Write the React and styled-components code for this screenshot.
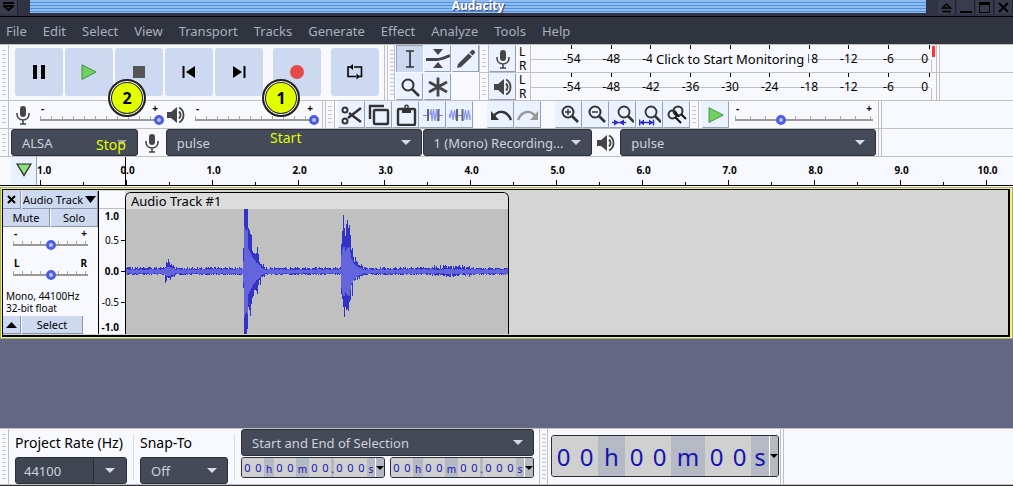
import React, { useState } from 'react'
import styled, { createGlobalStyle } from 'styled-components'

const menus = ['File', 'Edit', 'Select', 'View', 'Transport', 'Tracks', 'Generate', 'Effect', 'Analyze', 'Tools', 'Help']
const levels = ['-54', '-48', '-42', '-36', '-30', '-24', '-18', '-12', '-6', '0']
const hiddenLevels = ['-36', '-30', '-24'] // covered by the monitoring hint
const seconds = ['1.0', '0.0', '1.0', '2.0', '3.0', '4.0', '5.0', '6.0', '7.0', '8.0', '9.0', '10.0']

// [up, down, inner] peaks in pixels from the centre line, keyed by start column
const bursts = {
  39: [[4, 11, 3], [9, 9, 4], [8, 5, 4], [12, 6, 4], [9, 6, 4], [6, 8, 4], [7, 5, 3], [5, 5, 3], [6, 4, 3], [4, 5, 3]],
  117: [
    [23, 16, 10], [62, 63, 45], [62, 63, 42], [62, 63, 40], [62, 57, 42], [43, 35, 22], [41, 38, 20], [37, 44, 18],
    [36, 32, 16], [20, 26, 14], [18, 24, 12], [18, 18, 11], [17, 18, 10], [18, 19, 8], [24, 22, 8], [17, 13, 7],
    [9, 8, 6], [7, 13, 5], [7, 5, 3], [5, 5, 3], [7, 4, 2], [4, 5, 2],
  ],
  215: [
    [27, 22, 16], [40, 27, 22], [56, 35, 24], [43, 45, 24], [35, 35, 20], [47, 38, 22], [51, 37, 24], [43, 39, 23],
    [46, 30, 24], [36, 28, 18], [21, 13, 12], [23, 24, 11], [14, 7, 8], [9, 9, 7], [14, 8, 6], [10, 5, 5],
    [9, 8, 4], [6, 5, 4], [6, 7, 3], [5, 4, 3], [7, 4, 3], [5, 4, 2],
  ],
}

const makeWave = (length) => {
  let seed = 7
  const noise = () => {
    seed = (seed * 1103515245 + 12345) % 2147483648
    return seed / 2147483648
  }
  const columns = Array.from({ length }, (_, x) => {
    const swell = x > 305 && x < 345 ? 2 : 0
    return [2 + Math.round(noise() * (2 + swell)), 2 + Math.round(noise() * (1 + swell)), noise() > 0.4 ? 2 : 1]
  })
  Object.entries(bursts).forEach(([start, peaks]) => {
    peaks.forEach((peak, i) => { columns[Number(start) + i] = peak })
  })
  return columns
}
const wave = makeWave(382)
const outerPath = wave.map(([up, down], x) => `M${x} ${62 - up}h1v${up + down + 1}h-1z`).join('')
const innerPath = wave.map(([, , inner], x) => `M${x} ${62 - inner}h1v${inner * 2 + 1}h-1z`).join('')

//icons
const Mic = () => (
  <svg width='16' height='22' viewBox='0 0 16 22' fill='none' stroke='#454545'>
    <rect x='5' y='2' width='6' height='11' rx='3' fill='#454545' stroke='none' />
    <path d='M2 9v1c0 8 12 8 12 0V9M8 16v4M5 20h6' strokeWidth='1.6' />
  </svg>
)
const Speaker = () => (
  <svg width='20' height='20' viewBox='0 0 20 20' fill='none' stroke='#454545'>
    <path d='M1 7h4l6-5v16l-6-5H1z' fill='#454545' stroke='none' />
    <path d='M13 6.500c2 2 2 5 0 7' strokeWidth='2' />
    <path d='M13 2.500c6 3 6 12 0 15' strokeWidth='1.800' />
  </svg>
)
const PlayIcon = () => (
  <svg width='16' height='16' viewBox='0 0 16 16'>
    <path d='M1 .8 15.200 8 1 15.500z' fill='#70d060' stroke='#3e8a3e' strokeWidth='.9' />
  </svg>
)
const Icon = ({ children, width = 2 }) => (
  <svg width='22' height='22' viewBox='0 0 22 22' fill='none' stroke='#333' strokeWidth={width}>{children}</svg>
)

const transportIcons = {
  Pause: <Icon><path d='M7 4v14M15 4v14' stroke='#000' strokeWidth='4' /></Icon>,
  Play: <PlayIcon />,
  Stop: <Icon><path d='M5 5h12v12H5z' fill='#555' stroke='none' /></Icon>,
  'Skip to Start': <Icon><path d='M5.500 5v12' stroke='#000' /><path d='M17 5v12l-9-6z' fill='#000' stroke='none' /></Icon>,
  'Skip to End': <Icon><path d='M16.500 5v12' stroke='#000' /><path d='M5 5v12l9-6z' fill='#000' stroke='none' /></Icon>,
  Record: <Icon><circle cx='11' cy='11' r='7' fill='#e34a48' stroke='none' /></Icon>,
  Loop: (
    <Icon width={1.6}>
      <path d='M8 6H4v9.500h8M10 6h7.500v9.500H15' stroke='#000' strokeDasharray='none' />
      <path d='M9 3v6L5.500 6zM12.500 12.500v6l3.500-3z' fill='#000' stroke='none' />
    </Icon>
  ),
}

const tools = [
  ['Selection', <Icon width={1.7}><path d='M7 3h8M7 19h8M11 3v16' /></Icon>],
  ['Envelope', (
    <svg width='24' height='22' viewBox='0 0 24 22'>
      <path d='M7 1h10l-5 6zM7 20h10l-5-6z' fill='#454545' />
      <path d='M0 11.500h12c5-1 7-2 12-4' fill='none' stroke='#454545' strokeWidth='2.800' />
    </svg>
  )],
  ['Draw', <Icon><path d='M2 20l1-4L13.500 5.500l3.500 3L6 19zM14.500 4.500l2.200-2.200q1-1 2 0l1 1q1 1 0 2l-2.200 2.200z' fill='#454545' stroke='none' /></Icon>],
  ['Zoom', <Icon><circle cx='9' cy='9' r='5.500' /><path d='M13 13l7 7' strokeWidth='2.500' /></Icon>],
  ['Multi', <Icon width={2.8}><path d='M11 1.500v19M2 6l18 10M20 6 2 16' stroke='#454545' /></Icon>],
]

const lens = <><circle cx='10' cy='8' r='5.500' /><path d='M14 12l6 6' strokeWidth='2.600' /></>
const editTools = [
  ['Cut', <Icon><path d='M20 4 7 14M8 9l12 9' strokeWidth='2.600' /><circle cx='4' cy='6' r='2.500' /><circle cx='4' cy='17' r='2.500' /></Icon>],
  ['Copy', <Icon width={2.4}><rect x='6' y='6' width='14' height='14' rx='1' /><path d='M2 15V2h14' /></Icon>],
  ['Paste', <Icon width={2.4}><rect x='3' y='5' width='17' height='16' rx='1' /><path d='M7 4h9v5H7z' fill='#333' stroke='none' /><circle cx='11.500' cy='3' r='1.700' strokeWidth='1.400' /></Icon>],
  ['Trim', (
    <Icon width={1.2}>
      <path d='M1 11.500h5M17 11.500h4' stroke='#7681e8' />
      <path d='M8 11 9 5l1 12 1.500-12L13 17l1.500-12 1 12' stroke='#8a94f2' />
      <path d='M6 5v12M16.500 5v12' stroke='#666' strokeWidth='2' />
    </Icon>
  )],
  ['Silence', (
    <Icon width={1.2}>
      <path d='M0 10l1 4L2.500 6 4 16 5.500 6 7 16M15 16l1.500-10L18 16l1.500-10L21 16v-5' stroke='#8a94f2' />
      <path d='M8.500 11.500h5' stroke='#7681e8' />
      <path d='M8 5v12M13.500 5v12' stroke='#666' strokeWidth='2' />
    </Icon>
  )],
  null,
  ['Undo', <Icon><path d='M4 12C8 6 17 6 21 16' strokeWidth='2.400' /><path d='M1 7v9h8z' fill='#333' stroke='none' /></Icon>],
  ['Redo', <Icon><path d='M18 12C14 6 5 6 1 16' stroke='#999' strokeWidth='2.400' /><path d='M21 7v9h-8z' fill='#999' stroke='none' /></Icon>],
  null,
  ['Zoom In', <Icon>{lens}<path d='M10 5v6M7 8h6' strokeWidth='1.500' /></Icon>],
  ['Zoom Out', <Icon>{lens}<path d='M7 8h6' strokeWidth='1.500' /></Icon>],
  ['Zoom to Selection', <Icon width={1.8}><g transform='translate(2 0)'>{lens}</g><path d='M0 18.500h14' stroke='#2b2bd0' strokeWidth='1.400' /><path d='M2 15.500v6l5-3zM12 15.500v6l-5-3z' fill='#2b2bd0' stroke='none' /></Icon>],
  ['Fit to Width', <Icon width={1.8}><g transform='translate(2 0)'>{lens}</g><path d='M.7 15.500v6M14.500 15.500v6M0 18.500h14' stroke='#2b2bd0' strokeWidth='1.400' /><path d='M5 15.500v6l-4-3zM10 15.500v6l4-3z' fill='#2b2bd0' stroke='none' /></Icon>],
  ['Zoom Toggle', <Icon width={2}><circle cx='12' cy='7' r='4.500' /><circle cx='6.500' cy='10.500' r='4' /><path d='M15 10l5 5M9 13l6 6M9 8l4 5' stroke='#111' /></Icon>],
]

function Choice({ label, value, shaded }) {
  return (
    <SelectWrap $shaded={shaded}>
      <Select aria-label={label} defaultValue={value}><option>{value}</option></Select>
    </SelectWrap>
  )
}

function Slider({ label, initial, low = '-', high = '+', step = 11 }) {
  const [value, setValue] = useState(initial)
  return (
    <SliderBox>
      <Marks><span>{low}</span><span>{high}</span></Marks>
      <Range type='range' aria-label={label} $step={step} value={value} onChange={(e) => setValue(e.target.value)} />
    </SliderBox>
  )
}

function Meter({ label, icon, live }) {
  return (
    <MeterRow>
      <GripBar />
      <Tool aria-label={label}>{icon}</Tool>
      <Channels><span>L</span><span>R</span></Channels>
      <Scale>
        {levels.map((level) => (
          <Level key={level}>{live && hiddenLevels.includes(level) ? '' : level}</Level>
        ))}
        {live && <Monitor>Click to Start Monitoring</Monitor>}
      </Scale>
      <Clip $live={live} />
      <EndBar />
    </MeterRow>
  )
}

function TimeBox({ label, format, big }) {
  return (
    <TimeFrame role='group' aria-label={label} $big={big}>
      {format.split('').map((char, i) => (
        char === '0'
          ? <Digit key={i} $big={big} aria-label={`${label} digit ${i + 1}`} maxLength={1} defaultValue='0' />
          : <Unit key={i} $big={big} $char={char}>{char}</Unit>
      ))}
      <TimeButton aria-label={`${label} format`}><Triangle /></TimeButton>
    </TimeFrame>
  )
}

function App() {
  const [tool, setTool] = useState('Selection')

  return (
    <Page>
      <GlobalStyle />
      <TitleBar>
        <WindowButton aria-label='Window menu'>
          <svg width='11' height='10' viewBox='0 0 11 10' fill='none' stroke='#000' strokeWidth='2'><path d='M0 1h11M1 4h9L5.500 8z' /></svg>
        </WindowButton>
        <TitleText>Audacity</TitleText>
        <WindowButton aria-label='Shade'>
          <svg width='11' height='11' viewBox='0 0 11 11' fill='none' stroke='#000' strokeWidth='1.500'><path d='M1.500 6 5.500 2l4 4zM1 9.500h9' /></svg>
        </WindowButton>
        <WindowButton aria-label='Minimize'>
          <svg width='12' height='11' viewBox='0 0 12 11'><path d='M0 9h12v2H0z' /></svg>
        </WindowButton>
        <WindowButton aria-label='Maximize'>
          <svg width='11' height='11' viewBox='0 0 11 11'><path d='M0 0h11v11H0zM1 3v7h9V3z' fillRule='evenodd' /></svg>
        </WindowButton>
        <WindowButton aria-label='Close'>
          <svg width='11' height='11' viewBox='0 0 11 11' stroke='#000' strokeWidth='2'><path d='M1 1l9 9M10 1l-9 9' /></svg>
        </WindowButton>
      </TitleBar>

      <MenuBar>
        {menus.map((menu) => <MenuButton key={menu}>{menu}</MenuButton>)}
      </MenuBar>

      <ToolRow>
        <GripBar />
        <Transport>
          {Object.entries(transportIcons).map(([name, icon]) => (
            <TransportButton key={name} aria-label={name} $apart={name === 'Record' || name === 'Loop'}>
              {icon}
              {name === 'Stop' && <Badge $left='-7px'>2</Badge>}
              {name === 'Record' && <Badge $left='-11px'>1</Badge>}
            </TransportButton>
          ))}
        </Transport>
        <EndBar />
        <GripBar $slim />
        <ToolGrid>
          {tools.map(([name, icon]) => (
            <Tool key={name} aria-label={name} $active={tool === name} onClick={() => setTool(name)}>{icon}</Tool>
          ))}
        </ToolGrid>
        <Meters>
          <Meter label='Recording level' icon={<Mic />} live />
          <Meter label='Playback level' icon={<Speaker />} />
        </Meters>
      </ToolRow>

      <ToolRow>
        <GripBar />
        <Mixer>
          <Mic />
          <MixerSlider><Slider label='Recording volume' initial={100} /></MixerSlider>
          <Speaker />
          <MixerSlider><Slider label='Playback volume' initial={100} /></MixerSlider>
        </Mixer>
        <EndBar />
        <GripBar />
        <EditTools>
          {editTools.map((item, i) => (
            item ? <Tool key={i} aria-label={item[0]}>{item[1]}</Tool> : <Spacer key={i} />
          ))}
        </EditTools>
        <GripBar />
        <Speed>
          <Tool aria-label='Play at speed'><PlayIcon /></Tool>
          <SpeedSlider><Slider label='Playback speed' initial={33} step={15} /></SpeedSlider>
        </Speed>
        <EndBar />
      </ToolRow>

      <ToolRow>
        <GripBar />
        <Devices>
          <Choice label='Audio host' value='ALSA' shaded />
          <Mic />
          <Choice label='Recording device' value='pulse' />
          <Choice label='Recording channels' value='1 (Mono) Recording...' />
          <Speaker />
          <Choice label='Playback device' value='pulse' />
          <Note $x='96px' $y='3px'>Stop</Note>
          <Note $x='270px' $y='-4px'>Start</Note>
        </Devices>
        <EndBar />
      </ToolRow>

      <Timeline>
        <Pin aria-label='Pinned play head'>
          <svg width='16' height='14' viewBox='0 0 16 14'><path d='M1 1h14L8 12.500z' fill='#8ae07c' stroke='#222' strokeWidth='1.200' /></svg>
        </Pin>
        <Ruler>
          {seconds.map((second, i) => <Second key={i}>{second}</Second>)}
        </Ruler>
      </Timeline>

      <Track>
        <TrackPanel>
          <PanelRow>
            <PanelButton $narrow aria-label='Close track'>
              <svg width='9' height='9' viewBox='0 0 9 9' stroke='#000' strokeWidth='2'><path d='M1 1l7 7M8 1 1 8' /></svg>
            </PanelButton>
            <PanelButton>
              Audio Track
              <svg width='11' height='7' viewBox='0 0 11 7'><path d='M0 0h11L5.500 7z' /></svg>
            </PanelButton>
          </PanelRow>
          <PanelRow>
            <PanelButton>Mute</PanelButton>
            <PanelButton>Solo</PanelButton>
          </PanelRow>
          <PanelSliders>
            <Slider label='Gain' initial={50} step={9} />
            <Slider label='Pan' initial={50} low='L' high='R' step={9} />
          </PanelSliders>
          <Info>Mono, 44100Hz<br />32-bit float</Info>
          <PanelRow $foot>
            <PanelButton $narrow aria-label='Collapse'>
              <svg width='11' height='6' viewBox='0 0 11 6'><path d='M0 6h11L5.500 0z' /></svg>
            </PanelButton>
            <PanelButton>Select</PanelButton>
          </PanelRow>
        </TrackPanel>
        <Amplitude>
          <Amp $strong>1.0</Amp>
          <Amp $tick>0.5</Amp>
          <Amp $strong $tick>0.0</Amp>
          <Amp $tick>-0.5</Amp>
          <Amp $strong>-1.0</Amp>
        </Amplitude>
        <AudioClip>
          <ClipTitle>Audio Track #1</ClipTitle>
          <ClipWave viewBox='0 0 382 125' preserveAspectRatio='none' shapeRendering='crispEdges'>
            <path d={outerPath} fill='#3232c8' />
            <path d={innerPath} fill='#6464dc' />
          </ClipWave>
        </AudioClip>
      </Track>

      <Workspace />

      <StatusRow>
        <GripBar />
        <Field>
          <FieldLabel htmlFor='rate'>Project Rate (Hz)</FieldLabel>
          <Combo>
            <ComboInput id='rate' defaultValue='44100' />
            <ComboButton aria-label='Choose rate'><Triangle $light /></ComboButton>
          </Combo>
        </Field>
        <Divider />
        <Field $narrow>
          <FieldLabel as='span'>Snap-To</FieldLabel>
          <Choice label='Snap-To' value='Off' />
        </Field>
        <Divider />
        <SelectionField>
          <Choice label='Selection mode' value='Start and End of Selection' />
          <TimePair>
            <TimeBox label='Selection start' format='00h00m00.000s' />
            <TimeBox label='Selection end' format='00h00m00.000s' />
          </TimePair>
        </SelectionField>
        <GripBar $edge />
        <PositionField><TimeBox label='Audio position' format='00h00m00s' big /></PositionField>
        <EndBar />
      </StatusRow>
    </Page>
  )
}

//css
const GlobalStyle = createGlobalStyle`
  * { box-sizing: border-box; }
  body {
    margin: 0;
    font-family: 'Noto Sans', sans-serif;
    font-size: 14px;
    color: #000;
  }
  button, input, select { font: inherit; color: inherit; padding: 0; margin: 0; border: 0; border-radius: 0; }
  svg { display: block; flex: none; }
`
const Page = styled.div`
  display: flex;
  flex-direction: column;
  min-height: 100vh;
  overflow: hidden;
  background: #f8f9ff;
`
const TitleBar = styled.header`
  display: flex;
  height: 17px;
  gap: 1px;
  padding-bottom: 2px;
  background: #2f3343;
  border-bottom: 1px solid #000;
`
const TitleText = styled.div`
  flex: 1;
  height: 13px;
  margin: 0 11px;
  color: white;
  font-size: 12px;
  font-weight: bold;
  line-height: 12px;
  text-align: center;
  text-shadow: 1px 1px 1px #336;
  background: repeating-linear-gradient(#8fbdf2 0 2px, #4f91dc 2px 3px);
`
const WindowButton = styled.button`
  display: flex;
  align-items: center;
  justify-content: center;
  width: 18px;
  background: #383c4c;
  border-right: 1px solid #1d2130;
`
const MenuBar = styled.nav`
  display: flex;
  gap: 16px;
  height: 27px;
  padding-left: 6px;
  background: #2f343f;
`
const MenuButton = styled.button`
  color: #a9b0bd;
  font-size: 13px;
  background: none;
`
const ToolRow = styled.div`
  display: flex;
  border-bottom: 1px solid #c0c0c0;
  ${MenuBar} + & { border-top: 1px solid #c0c0c0; }
`
const GripBar = styled.div`
  flex: none;
  width: ${props => props.$slim ? '7px' : '9px'};
  border-right: 1px solid #c0c0c0;
  border-left: ${props => props.$edge ? '1px solid #c0c0c0' : 'none'};
  background: repeating-linear-gradient(#c4c6cc 0 1px, transparent 1px 4px) 2px 5px / 4px calc(100% - 9px) no-repeat;
`
const EndBar = styled.div`
  flex: none;
  width: 4px;
  border-left: 1px solid #c0c0c0;
  border-right: 1px solid #c0c0c0;
`
const Transport = styled.div`
  display: flex;
  gap: 2px;
  padding: 3px 5px 4px 6px;
`
const TransportButton = styled.button`
  position: relative;
  display: flex;
  align-items: center;
  justify-content: center;
  width: 48px;
  height: 48px;
  margin-left: ${props => props.$apart ? '8px' : '0'};
  background: #cdd9f0;
  border-radius: 3px;
`
const Badge = styled.span`
  position: absolute;
  z-index: 2;
  left: ${props => props.$left};
  top: 31px;
  width: 38px;
  height: 38px;
  border: 2px solid #222;
  border-radius: 50%;
  box-shadow: inset 0 0 0 1px #fff, inset 0 0 0 2px #222;
  background: #e2ff00;
  font-size: 16px;
  font-weight: bold;
  line-height: 34px;
`
const Tool = styled.button`
  display: flex;
  align-items: center;
  justify-content: center;
  flex: none;
  width: 27px;
  height: 27px;
  background: ${props => props.$active ? '#ccd8f0' : '#ebf2ff'};
  border: 1px solid ${props => props.$active ? '#ccd8f0' : '#ebf2ff'};
  border-right-color: ${props => props.$active ? '#ccd8f0' : '#96a0b4'};
  border-bottom-color: ${props => props.$active ? '#ccd8f0' : '#96a0b4'};
  border-top-color: ${props => props.$active ? '#96a0b4' : '#ebf2ff'};
  border-left-color: ${props => props.$active ? '#96a0b4' : '#ebf2ff'};
`
const ToolGrid = styled.div`
  display: grid;
  grid-template-columns: repeat(3, 27px);
  gap: 1px;
  padding-left: 1px;
`
const Meters = styled.div`
  flex: 1;
  border-left: 1px solid #c0c0c0;
`
const MeterRow = styled.div`
  display: flex;
  height: 27px;
  & + & {
    height: 28px;
    border-top: 1px solid #c0c0c0;
  }
`
const Channels = styled.div`
  display: flex;
  flex-direction: column;
  justify-content: space-between;
  width: 14px;
  padding-left: 3px;
  font-size: 12px;
  line-height: 13px;
`
const Scale = styled.div`
  position: relative;
  display: flex;
  flex: 0 1 400px;
  padding-left: 21px;
  background: linear-gradient(#c0c0c0, #c0c0c0) 0 14px / 100% 1px no-repeat;
  border-left: 1px solid #c0c0c0;
`
const Level = styled.div`
  flex: 2;
  font-size: 12px;
  line-height: 27px;
  text-align: center;
  background: linear-gradient(#000, #000) 50% 0 / 1px 4px no-repeat;
  &:nth-child(10) {
    flex: 1;
    text-align: right;
    background-position: 100% 0;
    padding-right: 2px;
  }
`
const Monitor = styled.button`
  position: absolute;
  left: 121px;
  top: 4px;
  height: 20px;
  padding: 0 4px;
  font-size: 13px;
  line-height: 20px;
  white-space: nowrap;
  background: #f8f9ff;
`
const Clip = styled.div`
  width: 6px;
  background:
    linear-gradient(${props => props.$live ? '#f33, #f33' : 'transparent, transparent'}) 2px 1px / 3px 11px no-repeat,
    linear-gradient(#c0c0c0, #c0c0c0) 1px 15px / 1px 100% no-repeat;
`
const Mixer = styled.div`
  display: flex;
  align-items: center;
  padding: 0 3px 0 6px;
  gap: 2px;
`
const SliderBox = styled.div`
  display: flex;
  flex-direction: column;
  width: 100%;
`
const MixerSlider = styled.div`
  width: 131px;
  padding-left: 2px;
`
const Speed = styled.div`
  display: flex;
  padding-left: 3px;
`
const SpeedSlider = styled.div`
  width: 149px;
  padding: 3px 0 0 1px;
`
const Marks = styled.div`
  display: flex;
  justify-content: space-between;
  padding: 0 6px;
  font-size: 10px;
  font-weight: bold;
  line-height: 9px;
`
const Range = styled.input`
  appearance: none;
  width: 100%;
  height: 12px;
  background:
    linear-gradient(#999, #999) 5px 6px / calc(100% - 10px) 2px no-repeat,
    repeating-linear-gradient(90deg, #aaa 0 1px, transparent 1px ${props => props.$step}px) 5px 3px / calc(100% - 10px) 4px no-repeat;
  &::-webkit-slider-thumb {
    appearance: none;
    width: 10px;
    height: 10px;
    margin-top: 1px;
    border: 3px solid #4d5ce8;
    border-radius: 50%;
    background: #c0c4d8;
  }
`
const EditTools = styled.div`
  display: flex;
  padding-left: 3px;
`
const Spacer = styled.div`
  width: 14px;
`
const Devices = styled.div`
  position: relative;
  display: grid;
  grid-template-columns: 127fr 26px 256fr 170fr 26px 256fr;
  align-items: center;
  justify-items: center;
  column-gap: 1px;
  width: 869px;
  padding: 0 2px;
`
const SelectWrap = styled.div`
  position: relative;
  width: 100%;
  &::after {
    content: '';
    position: absolute;
    right: 11px;
    top: 11px;
    border: 5px solid transparent;
    border-top-color: #d3dae3;
    border-bottom: 0;
    opacity: ${props => props.$shaded ? '0.6' : '1'};
    pointer-events: none;
  }
`
const Select = styled.select`
  appearance: none;
  display: block;
  width: 100%;
  height: 27px;
  padding-left: 10px;
  color: #ccd2dc;
  font-size: 13px;
  background: #444a58;
  border: 1px solid #2b2e39;
  border-radius: 3px;
`
const Note = styled.span`
  position: absolute;
  left: calc(${props => props.$x} - 9px);
  top: ${props => props.$y};
  color: #e2ff00;
  font-size: 14px;
  line-height: 26px;
`
const Timeline = styled.div`
  display: flex;
  height: 29px;
  padding-left: 11px;
  border-bottom: 1px solid #000;
  overflow: hidden;
`
const Pin = styled.button`
  display: flex;
  flex: none;
  justify-content: center;
  width: 26px;
  padding-top: 6px;
  background: #ebf2ff;
  border-right: 1px solid #96a0b4;
`
const Ruler = styled.div`
  display: flex;
  flex: 1;
  overflow: hidden;
  background: linear-gradient(#000, #000) 88px 0 / 1px 100% no-repeat;
`
const Second = styled.div`
  flex: none;
  width: 86px;
  padding-left: 1px;
  font-size: 10px;
  font-weight: bold;
  line-height: 26px;
  text-align: center;
  background:
    linear-gradient(#000, #000) calc(100% - 43px) 100% / 1px 5px no-repeat,
    linear-gradient(#000, #000) 100% 100% / 1px 3px no-repeat;
  &:first-child {
    width: 47px;
    padding: 0;
    text-align: left;
  }
`
const Track = styled.section`
  display: flex;
  height: 152px;
  margin-top: 1px;
  background: #d5d5d5;
  border: 2px solid #f4f46c;
  border-right-width: 3px;
  outline: 1px solid #a9a978;
  outline-offset: -1px;
  box-shadow: inset 0 0 0 1px #000, inset -2px -2px 0 #000;
  padding: 2px 2px 3px 1px;
`
const TrackPanel = styled.div`
  display: flex;
  flex-direction: column;
  flex: none;
  width: 96px;
  background: #f8f9ff;
  border-right: 1px solid #000;
`
const PanelRow = styled.div`
  display: flex;
  gap: 1px;
  height: 18px;
  margin-top: ${props => props.$foot ? 'auto' : '0'};
  padding-right: ${props => props.$foot ? '15px' : '0'};
`
const PanelButton = styled.button`
  display: flex;
  align-items: center;
  justify-content: center;
  flex: ${props => props.$narrow ? '0 0 18px' : '1'};
  gap: 2px;
  font-size: 11px;
  white-space: nowrap;
  background: #cdd9f0;
  border-right: 1px solid #8c96a8;
  border-bottom: 1px solid #8c96a8;
`
const PanelSliders = styled.div`
  display: flex;
  flex-direction: column;
  gap: 9px;
  padding: 2px 5px 0 5px;
`
const Info = styled.div`
  margin-top: 10px;
  padding-left: 3px;
  font-size: 10px;
  line-height: 12px;
`
const Amplitude = styled.div`
  display: grid;
  grid-template-rows: 24fr 31fr 31fr 25fr 14fr;
  flex: none;
  width: 26px;
  padding-top: 18px;
  background: linear-gradient(#c0c0c0, #c0c0c0) 0 17px / 100% 1px no-repeat #f8f9ff;
`
const Amp = styled.div`
  padding-right: 6px;
  font-size: 10px;
  font-weight: ${props => props.$strong ? 'bold' : 'normal'};
  line-height: 14px;
  text-align: right;
  background: ${props => props.$tick ? 'linear-gradient(#000, #000) 100% 7px / 4px 1px no-repeat' : 'none'};
`
const AudioClip = styled.div`
  display: flex;
  flex-direction: column;
  flex: 0 1 384px;
  margin-top: 1px;
  background: #c0c0c0;
  border: 1px solid #000;
  border-bottom: 0;
  border-radius: 6px 6px 0 0;
  overflow: hidden;
`
const ClipTitle = styled.div`
  height: 16px;
  padding-left: 5px;
  font-size: 13px;
  line-height: 17px;
  background: #dcdcdc;
`
const ClipWave = styled.svg`
  flex: 1 1 0;
  width: 100%;
  min-height: 0;
`
const Workspace = styled.main`
  flex: 1;
  background: #636784;
`
const StatusRow = styled.footer`
  display: flex;
  height: 58px;
  border-top: 1px solid #c0c0c0;
  border-bottom: 1px solid #303038;
  box-shadow: inset 0 -1px 0 #c0c0c0;
`
const Field = styled.div`
  display: flex;
  flex-direction: column;
  justify-content: space-between;
  width: ${props => props.$narrow ? '100px' : '124px'};
  padding: 2px 6px 1px;
`
const FieldLabel = styled.label`
  font-size: 14px;
  line-height: 24px;
  white-space: nowrap;
`
const Combo = styled.div`
  display: flex;
  height: 27px;
  color: #ccd2dc;
  background: #444a58;
  border: 1px solid #2b2e39;
  border-radius: 3px;
`
const ComboInput = styled.input`
  flex: 1;
  min-width: 0;
  padding-left: 8px;
  font-size: 13px;
  background: #404552;
  border-right: 1px solid #2b2e39;
`
const ComboButton = styled.button`
  display: flex;
  align-items: center;
  justify-content: center;
  width: 32px;
  background: none;
`
const Divider = styled.div`
  width: 1px;
  margin: 5px 0;
  background: #dcdde4;
`
const SelectionField = styled.div`
  display: flex;
  flex-direction: column;
  gap: 1px;
  width: 304px;
  padding: 0 5px 0 6px;
`
const TimePair = styled.div`
  display: flex;
  gap: 5px;
`
const PositionField = styled.div`
  padding: 6px 1px 0 3px;
`
const TimeFrame = styled.div`
  display: flex;
  flex: none;
  height: ${props => props.$big ? '42px' : '21px'};
  color: #1414b4;
  background: #b5b9c4;
  border: 1px solid #2b2e39;
  border-radius: 3px;
  overflow: hidden;
`
const Digit = styled.input`
  width: ${props => props.$big ? '23px' : '11px'};
  font-size: ${props => props.$big ? '24px' : '11px'};
  text-align: center;
  background: #d0d0d0;
`
const unitWidths = { h: [10, 27], m: [13, 34], s: [8, 18], '.': [3, 8] }
const Unit = styled.span`
  width: ${props => unitWidths[props.$char][props.$big ? 1 : 0]}px;
  font-size: ${props => props.$big ? '24px' : '10px'};
  line-height: ${props => props.$big ? '42px' : '22px'};
  text-align: center;
`
const TimeButton = styled.button`
  display: flex;
  align-items: center;
  justify-content: center;
  width: 9px;
  background: #b5b9c4;
  border-left: 1px solid #fff;
`
const Triangle = styled.span`
  flex: none;
  border: ${props => props.$light ? '5px' : '4px'} solid transparent;
  border-top-color: ${props => props.$light ? '#d3dae3' : '#000'};
  border-bottom: 0;
`

export default App
